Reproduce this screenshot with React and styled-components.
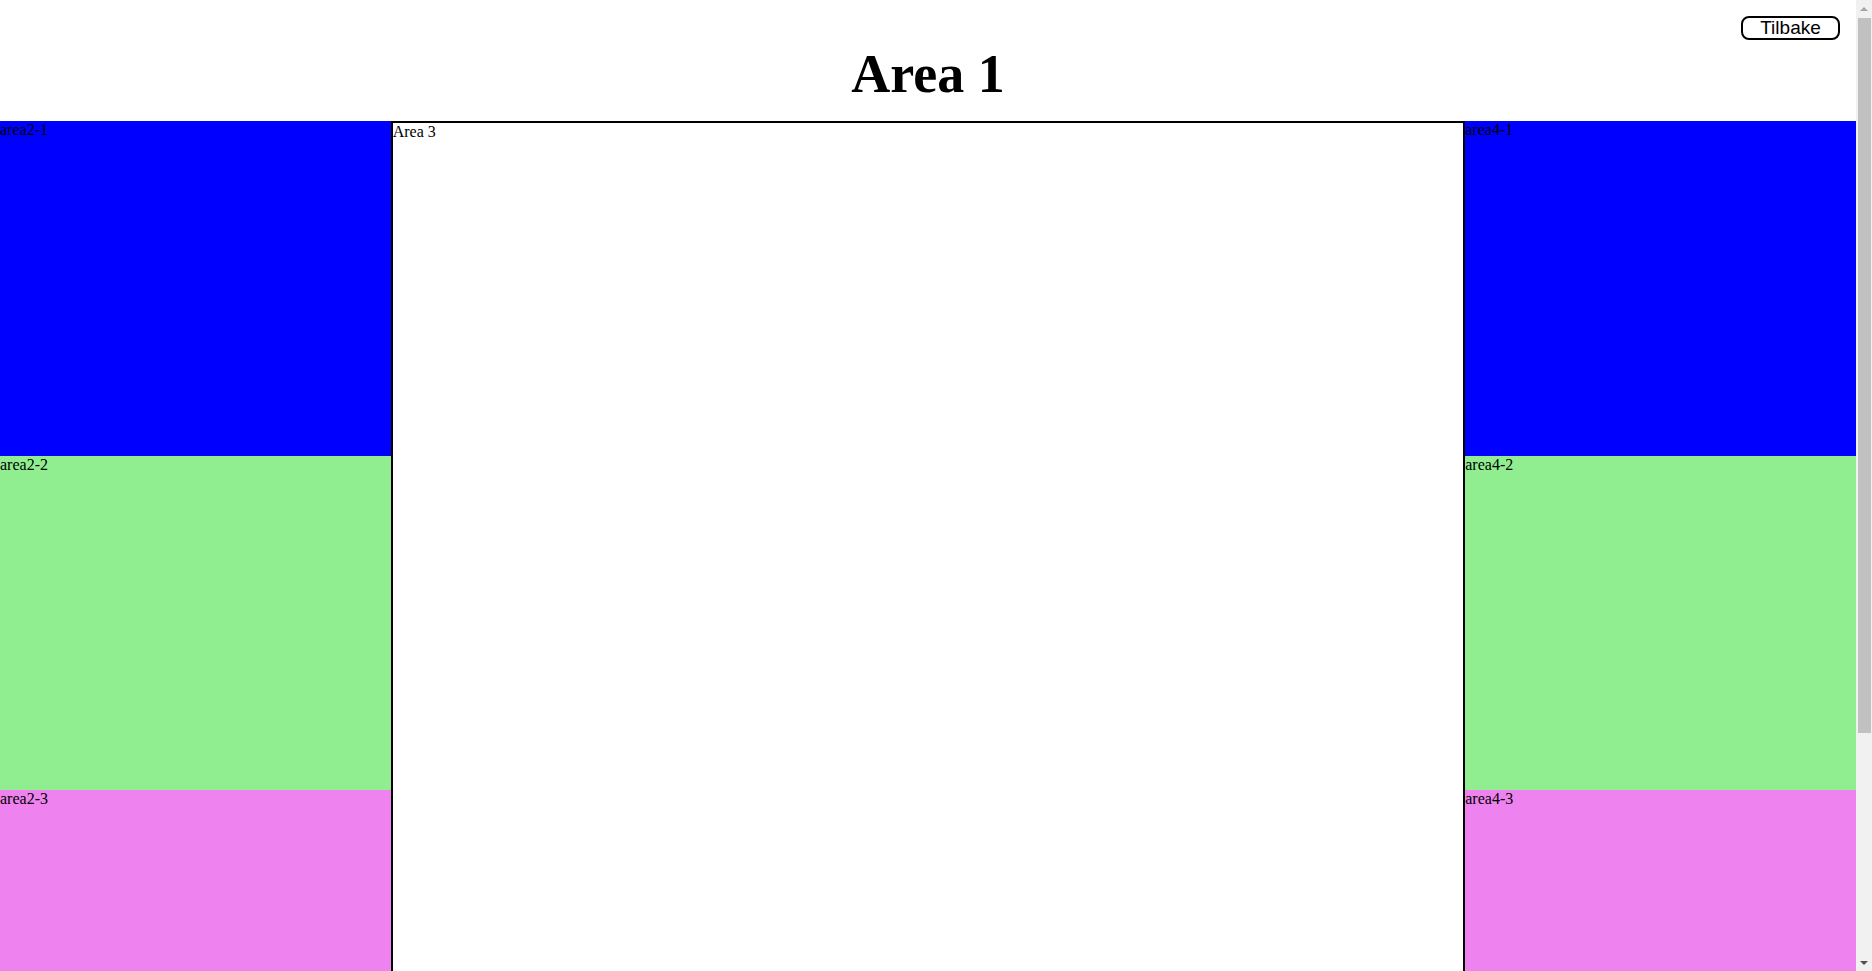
import React from "react";
import styled, { createGlobalStyle } from "styled-components";

const GlobalStyle = createGlobalStyle`
  html, body {
    margin: 0;
    padding: 0;
    background: #fff;
  }
  body {
    font-family: "Liberation Serif", "Times New Roman", serif;
    font-size: 16px;
    color: #000;
  }
`;

const columns = [
  { name: "area2", items: ["area2-1", "area2-2", "area2-3"] },
  { name: "area4", items: ["area4-1", "area4-2", "area4-3"] },
];

const colours = ["#0000ff", "#90ee90", "#ee82ee"];

const App = () => {
  return (
    <Shell>
      <GlobalStyle />
      <Page>
        <Header>
          <Spacer />
          <Title>Area 1</Title>
          <BackButton>Tilbake</BackButton>
        </Header>
        <Layout>
          {columns[0].items.map((label, i) => (
            <Panel key={label} $bg={colours[i]} $col={1} $row={i + 1}>
              {label}
            </Panel>
          ))}
          <Main>Area 3</Main>
          {columns[1].items.map((label, i) => (
            <Panel key={label} $bg={colours[i]} $col={3} $row={i + 1}>
              {label}
            </Panel>
          ))}
        </Layout>
      </Page>
      <ScrollRail aria-hidden="true">
        <Arrow $up />
        <Thumb />
        <Track />
        <Arrow />
      </ScrollRail>
    </Shell>
  );
};

const Shell = styled.div`
  display: flex;
  align-items: flex-start;
`;

const Page = styled.div`
  flex: 1;
  min-width: 0;
  padding-bottom: 148px;
`;

const Header = styled.header`
  display: grid;
  grid-template-columns: 1fr auto 1fr;
  box-sizing: border-box;
  height: 121px;
  padding: 16px 16px 0;
`;

const Spacer = styled.div``;

const Title = styled.h1`
  margin: 27px 0 0;
  font-size: 54px;
  line-height: 62px;
  font-weight: bold;
  text-align: center;
`;

const BackButton = styled.button`
  justify-self: end;
  align-self: start;
  box-sizing: border-box;
  height: 24px;
  width: 99px;
  padding: 0;
  border: 2px solid #000;
  border-radius: 8px;
  background: #fff;
  font-family: "Liberation Sans", Arial, sans-serif;
  font-size: 19px;
  line-height: 20px;
  color: #000;
  cursor: pointer;
`;

const Layout = styled.div`
  display: grid;
  grid-template-columns: 1fr 2.75fr 1fr;
  grid-template-rows: 335px 334px 336px;
`;

const Panel = styled.div`
  grid-column: ${(p) => p.$col};
  grid-row: ${(p) => p.$row};
  background: ${(p) => p.$bg};
  line-height: 18px;
`;

const Main = styled.div`
  grid-column: 2;
  grid-row: 1 / span 3;
  box-sizing: border-box;
  border: 2px solid #000;
  line-height: 18px;
`;

const ScrollRail = styled.div`
  position: sticky;
  top: 0;
  flex: 0 0 16px;
  height: 100vh;
  display: flex;
  flex-direction: column;
  background: #f1f1f1;
`;

const Arrow = styled.div`
  flex: 0 0 17px;
  display: flex;
  align-items: center;
  justify-content: center;

  &::after {
    content: "";
    width: 0;
    height: 0;
    border-left: 4px solid transparent;
    border-right: 4px solid transparent;
    ${(p) =>
      p.$up
        ? "border-bottom: 4px solid #a3a3a3; margin-top: 1px;"
        : "border-top: 4px solid #505050;"}
  }
`;

const Thumb = styled.div`
  flex: 0 0 715px;
  margin: 1px 1px 0 2px;
  background: #c1c1c1;
`;

const Track = styled.div`
  flex: 1;
`;

export default App;
